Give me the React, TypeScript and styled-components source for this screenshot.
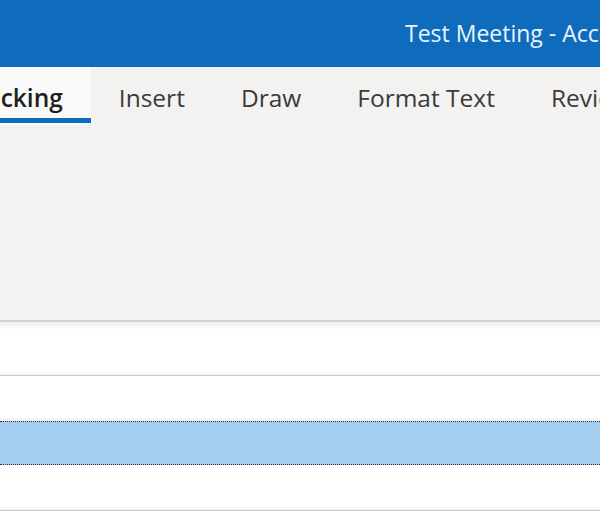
import React from 'react';
import styled, { createGlobalStyle } from 'styled-components';

const GlobalStyle = createGlobalStyle`
  html, body {
    margin: 0;
    padding: 0;
    background: #ffffff;
    overflow: hidden;
  }
  body {
    font-family: "Open Sans", "Noto Sans", "Liberation Sans", sans-serif;
  }
`;

const Window = styled.div`
  width: 600px;
  height: 525px;
  display: flex;
  flex-direction: column;
  overflow: hidden;
  background: #ffffff;
`;

const TitleBar = styled.div`
  height: 67px;
  flex: none;
  background: #0f6cbd;
  display: flex;
  align-items: center;
  padding-left: 405px;
  overflow: hidden;
`;

const Title = styled.span`
  color: #eaf4ff;
  font-size: 23px;
  white-space: nowrap;
  padding-bottom: 2px;
`;

const Ribbon = styled.div`
  background: #f3f2f1;
  flex: none;
  display: flex;
  flex-direction: column;
  border-bottom: 2px solid #d2d0ce;
`;

// the strip is scrolled left, so the first tab is partly out of view
const TabStrip = styled.div`
  height: 58px;
  display: flex;
  margin-left: -66px;
  white-space: nowrap;
`;

const Tab = styled.div<{ $active?: boolean }>`
  position: relative;
  display: flex;
  align-items: center;
  padding: 2px 28px 0;
  font-size: 24.5px;
  color: ${(p) => (p.$active ? '#201f1e' : '#3b3a39')};
  font-weight: ${(p) => (p.$active ? 600 : 400)};
  background: ${(p) => (p.$active ? '#f9f9f9' : 'transparent')};

  &::after {
    content: '';
    display: ${(p) => (p.$active ? 'block' : 'none')};
    position: absolute;
    left: 0;
    right: 0;
    bottom: 2px;
    height: 5px;
    background: #0f6cbd;
  }
`;

const RibbonBody = styled.div`
  height: 195px;
`;

const Shadow = styled.div`
  height: 8px;
  flex: none;
  background: linear-gradient(#ededed, #ffffff);
`;

const Row = styled.div<{ $h: number; $selected?: boolean }>`
  height: ${(p) => p.$h}px;
  flex: none;
  box-sizing: border-box;
  background: ${(p) => (p.$selected ? '#a4cdf0' : '#ffffff')};
  border-top: ${(p) => (p.$selected ? '1px dotted #2b3440' : 'none')};
  border-bottom: ${(p) => (p.$selected ? '1px dotted #2b3440' : 'none')};
  box-shadow: ${(p) =>
    p.$selected ? '0 3px 0 #f2f4f4, 0 -3px 0 #f2f4f4' : 'none'};
`;

const Divider = styled.div`
  flex: none;
  height: 6px;
  box-sizing: border-box;
  background: linear-gradient(#ffffff, #f4f4f4);
  border-bottom: 1px solid #c8c8c8;
`;

export default function App() {
  const tabs = ['Tracking', 'Insert', 'Draw', 'Format Text', 'Review'];
  return (
    <>
      <GlobalStyle />
      <Window>
        <TitleBar>
          <Title>Test Meeting - Accessibility checker</Title>
        </TitleBar>
        <Ribbon>
          <TabStrip>
            {tabs.map((t, i) => (
              <Tab key={t} $active={i === 0}>
                {t}
              </Tab>
            ))}
          </TabStrip>
          <RibbonBody />
        </Ribbon>
        <Shadow />
        <Row $h={40} />
        <Divider />
        <Row $h={45} />
        <Row $h={44} $selected />
        <Row $h={40} />
        <Divider />
      </Window>
    </>
  );
}
